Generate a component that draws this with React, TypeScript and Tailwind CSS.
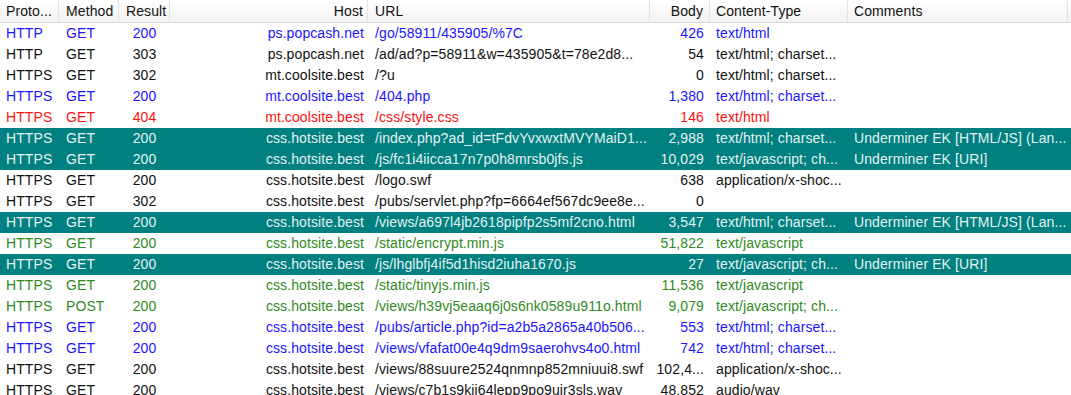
import React from 'react';

type Tone = 'blue' | 'black' | 'red' | 'green' | 'sel';

type Session = {
  proto: string;
  method: string;
  result: string;
  host: string;
  url: string;
  body: string;
  type: string;
  comments?: string;
  tone: Tone;
};

const sessions: Session[] = [
  { proto: 'HTTP', method: 'GET', result: '200', host: 'ps.popcash.net', url: '/go/58911/435905/%7C', body: '426', type: 'text/html', tone: 'blue' },
  { proto: 'HTTP', method: 'GET', result: '303', host: 'ps.popcash.net', url: '/ad/ad?p=58911&w=435905&t=78e2d8...', body: '54', type: 'text/html; charset...', tone: 'black' },
  { proto: 'HTTPS', method: 'GET', result: '302', host: 'mt.coolsite.best', url: '/?u', body: '0', type: 'text/html; charset...', tone: 'black' },
  { proto: 'HTTPS', method: 'GET', result: '200', host: 'mt.coolsite.best', url: '/404.php', body: '1,380', type: 'text/html; charset...', tone: 'blue' },
  { proto: 'HTTPS', method: 'GET', result: '404', host: 'mt.coolsite.best', url: '/css/style.css', body: '146', type: 'text/html', tone: 'red' },
  { proto: 'HTTPS', method: 'GET', result: '200', host: 'css.hotsite.best', url: '/index.php?ad_id=tFdvYvxwxtMVYMaiD1...', body: '2,988', type: 'text/html; charset...', comments: 'Underminer EK [HTML/JS] (Lan...', tone: 'sel' },
  { proto: 'HTTPS', method: 'GET', result: '200', host: 'css.hotsite.best', url: '/js/fc1i4iicca17n7p0h8mrsb0jfs.js', body: '10,029', type: 'text/javascript; ch...', comments: 'Underminer EK [URI]', tone: 'sel' },
  { proto: 'HTTPS', method: 'GET', result: '200', host: 'css.hotsite.best', url: '/logo.swf', body: '638', type: 'application/x-shoc...', tone: 'black' },
  { proto: 'HTTPS', method: 'GET', result: '302', host: 'css.hotsite.best', url: '/pubs/servlet.php?fp=6664ef567dc9ee8e...', body: '0', type: '', tone: 'black' },
  { proto: 'HTTPS', method: 'GET', result: '200', host: 'css.hotsite.best', url: '/views/a697l4jb2618pipfp2s5mf2cno.html', body: '3,547', type: 'text/html; charset...', comments: 'Underminer EK [HTML/JS] (Lan...', tone: 'sel' },
  { proto: 'HTTPS', method: 'GET', result: '200', host: 'css.hotsite.best', url: '/static/encrypt.min.js', body: '51,822', type: 'text/javascript', tone: 'green' },
  { proto: 'HTTPS', method: 'GET', result: '200', host: 'css.hotsite.best', url: '/js/lhglbfj4if5d1hisd2iuha1670.js', body: '27', type: 'text/javascript; ch...', comments: 'Underminer EK [URI]', tone: 'sel' },
  { proto: 'HTTPS', method: 'GET', result: '200', host: 'css.hotsite.best', url: '/static/tinyjs.min.js', body: '11,536', type: 'text/javascript', tone: 'green' },
  { proto: 'HTTPS', method: 'POST', result: '200', host: 'css.hotsite.best', url: '/views/h39vj5eaaq6j0s6nk0589u911o.html', body: '9,079', type: 'text/javascript; ch...', tone: 'green' },
  { proto: 'HTTPS', method: 'GET', result: '200', host: 'css.hotsite.best', url: '/pubs/article.php?id=a2b5a2865a40b506...', body: '553', type: 'text/html; charset...', tone: 'blue' },
  { proto: 'HTTPS', method: 'GET', result: '200', host: 'css.hotsite.best', url: '/views/vfafat00e4q9dm9saerohvs4o0.html', body: '742', type: 'text/html; charset...', tone: 'blue' },
  { proto: 'HTTPS', method: 'GET', result: '200', host: 'css.hotsite.best', url: '/views/88suure2524qnmnp852mniuui8.swf', body: '102,4...', type: 'application/x-shoc...', tone: 'black' },
  { proto: 'HTTPS', method: 'GET', result: '200', host: 'css.hotsite.best', url: '/views/c7b1s9kji64lepp9po9ujr3sls.wav', body: '48,852', type: 'audio/wav', tone: 'black' },
];

const toneClass: Record<Tone, string> = {
  blue: 'text-[#1c14ff] bg-white',
  black: 'text-[#111111] bg-white',
  red: 'text-[#ff1010] bg-white',
  green: 'text-[#2f8a1c] bg-white',
  sel: 'text-[#e4f2f2] bg-[#008080]',
};

function HeadCell({ label, className }: { label: string; className: string }) {
  return (
    <div className={`shrink-0 h-full flex items-center border-r border-[#e3e3e3] whitespace-nowrap overflow-hidden ${className}`}>
      {label}
    </div>
  );
}

export default function App() {
  return (
    <div
      className="w-[1071px] h-[395px] overflow-hidden bg-white text-[14px] leading-[17px] tracking-[0.1px]"
      style={{ fontFamily: '"Liberation Sans", Arial, sans-serif' }}
    >
      {/* column headers */}
      <div className="flex h-[23px] bg-gradient-to-b from-white to-[#f3f3f3] border-b border-[#d5d5d5] text-[#111]">
        <HeadCell label="Proto..." className="w-[59px] pl-[6px]" />
        <HeadCell label="Method" className="w-[60px] pl-[7px]" />
        <HeadCell label="Result" className="w-[51px] pl-[7px]" />
        <HeadCell label="Host" className="w-[198px] justify-end pr-[4px]" />
        <HeadCell label="URL" className="w-[282px] pl-[7px]" />
        <HeadCell label="Body" className="w-[60px] justify-end pr-[6px]" />
        <HeadCell label="Content-Type" className="w-[138px] pl-[6px]" />
        <HeadCell label="Comments" className="w-[220px] pl-[6px]" />
        <div className="flex-1" />
      </div>

      {/* session rows */}
      {sessions.map((s, i) => (
        <div key={i} className={`flex h-[21px] items-center whitespace-nowrap ${toneClass[s.tone]}`}>
          <div className="w-[59px] shrink-0 pl-[6px]">{s.proto}</div>
          <div className="w-[60px] shrink-0 pl-[7px]">{s.method}</div>
          <div className="w-[51px] shrink-0 text-center">{s.result}</div>
          <div className="w-[198px] shrink-0 text-right pr-[4px] overflow-hidden">{s.host}</div>
          <div className="w-[282px] shrink-0 pl-[7px] overflow-hidden">{s.url}</div>
          <div className="w-[60px] shrink-0 text-right pr-[6px]">{s.body}</div>
          <div className="w-[138px] shrink-0 pl-[6px] overflow-hidden">{s.type}</div>
          <div className="w-[220px] shrink-0 pl-[6px] overflow-hidden">{s.comments ?? ''}</div>
          <div className="flex-1" />
        </div>
      ))}
    </div>
  );
}
